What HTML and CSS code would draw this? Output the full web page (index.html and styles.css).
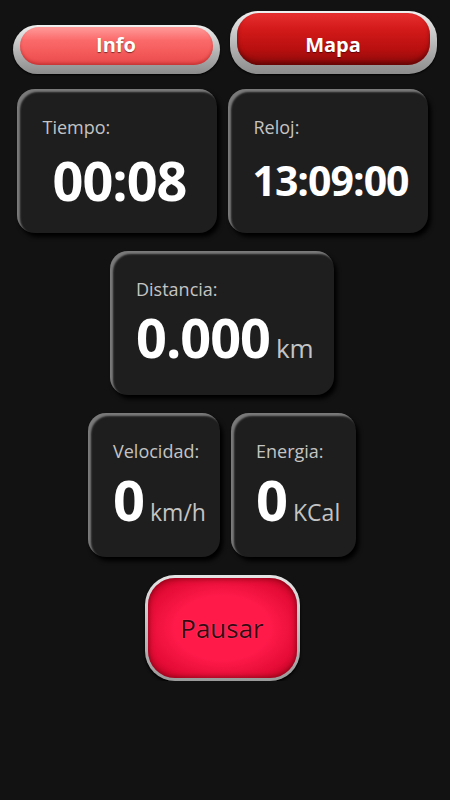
FILE: index.html
```html
<!DOCTYPE html>
<html lang="es">
<head>
    <meta charset="UTF-8">
    <meta name="viewport" content="width=device-width, initial-scale=1.0">
    <title>Entrenamiento</title>
    <link rel="stylesheet" href="styles.css">
</head>
<body>
    <div class="tabs">
        <div class="tab tab-info"><div class="tab-face">Info</div></div>
        <div class="tab tab-map"><div class="tab-face">Mapa</div></div>
    </div>

    <div class="panel">
        <div class="row">
            <div class="card card-half">
                <div class="label">Tiempo:</div>
                <div class="value value-center"><span class="big">00:08</span></div>
            </div>
            <div class="card card-half">
                <div class="label">Reloj:</div>
                <div class="value value-center"><span class="big clock">13:09:00</span></div>
            </div>
        </div>

        <div class="row">
            <div class="card card-dist">
                <div class="label">Distancia:</div>
                <div class="value"><span class="big">0.000</span><span class="unit">km</span></div>
            </div>
        </div>

        <div class="row">
            <div class="card card-speed">
                <div class="label">Velocidad:</div>
                <div class="value"><span class="big small-big">0</span><span class="unit unit-small">km/h</span></div>
            </div>
            <div class="card card-energy">
                <div class="label">Energia:</div>
                <div class="value"><span class="big small-big">0</span><span class="unit unit-small">KCal</span></div>
            </div>
        </div>

        <div class="row">
            <button class="pause"><span class="pause-face">Pausar</span></button>
        </div>
    </div>
</body>
</html>
```

FILE: styles.css
```css
body {
    margin: 0;
    background-color: #121212;
    color: #ffffff;
    font-family: "Open Sans", "Noto Sans", sans-serif;
}

/* pestañas de arriba */
.tabs {
    display: flex;
    align-items: flex-end;
    justify-content: center;
    gap: 10px;
    padding: 11px 1px 0 0;
}
.tab {
    width: 193px;
    padding: 2px 7px 9px;
    border-radius: 28px;
    background: linear-gradient(#f0f0f0, #b4b4b4 55%, #8c8c8c);
    box-shadow: 0 1px 2px #000;
}
.tab-face {
    display: flex;
    align-items: center;
    justify-content: center;
    border-radius: 22px;
    font-weight: bold;
    font-size: 20px;
    text-shadow: 0 1px 1px rgba(0, 0, 0, 0.5);
}
.tab-info .tab-face {
    height: 38px;
    box-sizing: border-box;
    padding-bottom: 3px;
    background: linear-gradient(#ff9a9a, #fb6a6a 35%, #f25656 75%, #e84a4a);
    box-shadow: inset 0 -2px 3px rgba(150, 20, 20, 0.4);
}
.tab-map .tab-face {
    height: 52px;
    box-sizing: border-box;
    padding-top: 10px;
    background: linear-gradient(#e83030, #d41a1a 30%, #b80f0f 70%, #8e0a0a);
    box-shadow: inset 0 -3px 4px rgba(60, 0, 0, 0.5);
}

/* tarjetas */
.panel {
    display: flex;
    flex-direction: column;
    gap: 18px;
    padding: 15px 6px 0 0;
}
.row {
    display: flex;
    justify-content: center;
    gap: 11px;
}
.card {
    box-sizing: border-box;
    height: 144px;
    padding: 26px 0 0 26px;
    border-radius: 18px;
    background-color: #1e1e1e;
    box-shadow: inset 3px 3px 2px #7a7a7a, 3px 4px 4px #000;
}
.card-half { width: 200px; padding-right: 20px; }
.card-dist { width: 224px; }
.card-speed { width: 132px; padding-left: 25px; }
.card-energy { width: 125px; padding-left: 25px; }
.label {
    font-size: 18px;
    line-height: 24px;
    color: #c4c4c4;
}
.value {
    display: flex;
    align-items: baseline;
    gap: 6px;
    margin-top: 6px;
    line-height: 60px;
}
.value-center {
    justify-content: center;
    margin-top: 11px;
}
.big {
    font-size: 54px;
    font-weight: bold;
    letter-spacing: -1px;
}
.clock { font-size: 41px; }
.small-big { font-size: 56px; }
.unit {
    font-size: 26px;
    color: #c4c4c4;
}
.unit-small { font-size: 23px; }

/* boton pausar */
.pause {
    width: 155px;
    height: 106px;
    padding: 3px;
    border: none;
    border-radius: 30px;
    background: linear-gradient(#e4e4e4, #9a9a9a);
    box-shadow: 0 2px 3px #000;
    cursor: pointer;
}
.pause-face {
    display: flex;
    align-items: center;
    justify-content: center;
    height: 100%;
    border-radius: 27px;
    background: radial-gradient(ellipse at center, #ff1a4a 45%, #e40c36 75%, #b8001f);
    box-shadow: inset 0 0 6px rgba(90, 0, 10, 0.8);
    font-family: "Open Sans", sans-serif;
    font-size: 26px;
    color: #3c0610;
    text-shadow: 0 0 1px rgba(255, 170, 180, 0.7);
}
```
